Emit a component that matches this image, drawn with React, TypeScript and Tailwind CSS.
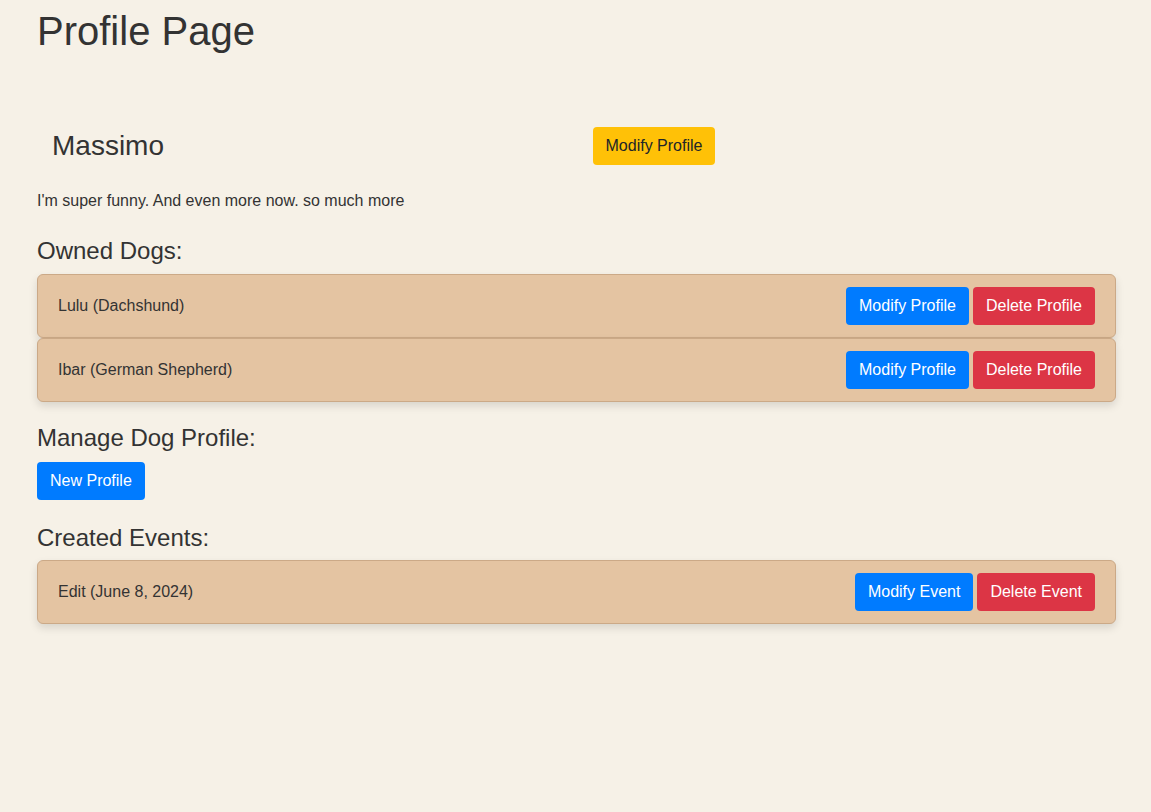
const dogs = [
  { name: "Lulu", breed: "Dachshund" },
  { name: "Ibar", breed: "German Shepherd" },
];

const events = [{ title: "Edit", date: "June 8, 2024" }];

const btn =
  "inline-block rounded-[4px] border border-transparent px-3 py-[6px] text-base leading-6";

const ItemCard = ({
  label,
  modifyText,
  deleteText,
}: {
  label: string;
  modifyText: string;
  deleteText: string;
}) => (
  <div className="flex items-center justify-between rounded-md border border-[#cba987] bg-[#e4c4a2] px-5 py-3 shadow-[0_4px_8px_rgba(0,0,0,0.12)]">
    <span className="text-base text-[#333]">{label}</span>
    <div className="flex gap-1">
      <button className={`${btn} bg-[#007bff] text-white`}>{modifyText}</button>
      <button className={`${btn} bg-[#dc3545] text-white`}>{deleteText}</button>
    </div>
  </div>
);

export default function App() {
  return (
    <div className="min-h-[812px] bg-[#f6f1e7] font-['Liberation_Sans',Arial,sans-serif] text-[#333]">
      <div className="ml-[37px] w-[1079px] pt-[7px]">
        <h1 className="text-[40px] leading-[48px]">Profile Page</h1>

        <div className="mt-[72px] flex items-center">
          <div className="w-1/2 px-[15px]">
            <h3 className="text-[28px] leading-[34px]">Massimo</h3>
          </div>
          <div className="w-1/2 px-4">
            <button className={`${btn} bg-[#ffc107] text-[#212529]`}>
              Modify Profile
            </button>
          </div>
        </div>

        <p className="mt-6 text-base leading-6">
          I'm super funny. And even more now. so much more
        </p>

        <h4 className="mt-[23px] mb-[9px] text-2xl leading-[29px]">Owned Dogs:</h4>
        <div className="flex flex-col">
          {dogs.map((dog) => (
            <ItemCard
              key={dog.name}
              label={`${dog.name} (${dog.breed})`}
              modifyText="Modify Profile"
              deleteText="Delete Profile"
            />
          ))}
        </div>

        <h4 className="mt-[21px] mb-[10px] text-2xl leading-[29px]">
          Manage Dog Profile:
        </h4>
        <button className={`${btn} bg-[#007bff] text-white`}>New Profile</button>

        <h4 className="mt-[23px] mb-2 text-2xl leading-[29px]">Created Events:</h4>
        {events.map((ev) => (
          <ItemCard
            key={ev.title}
            label={`${ev.title} (${ev.date})`}
            modifyText="Modify Event"
            deleteText="Delete Event"
          />
        ))}
      </div>
    </div>
  );
}
